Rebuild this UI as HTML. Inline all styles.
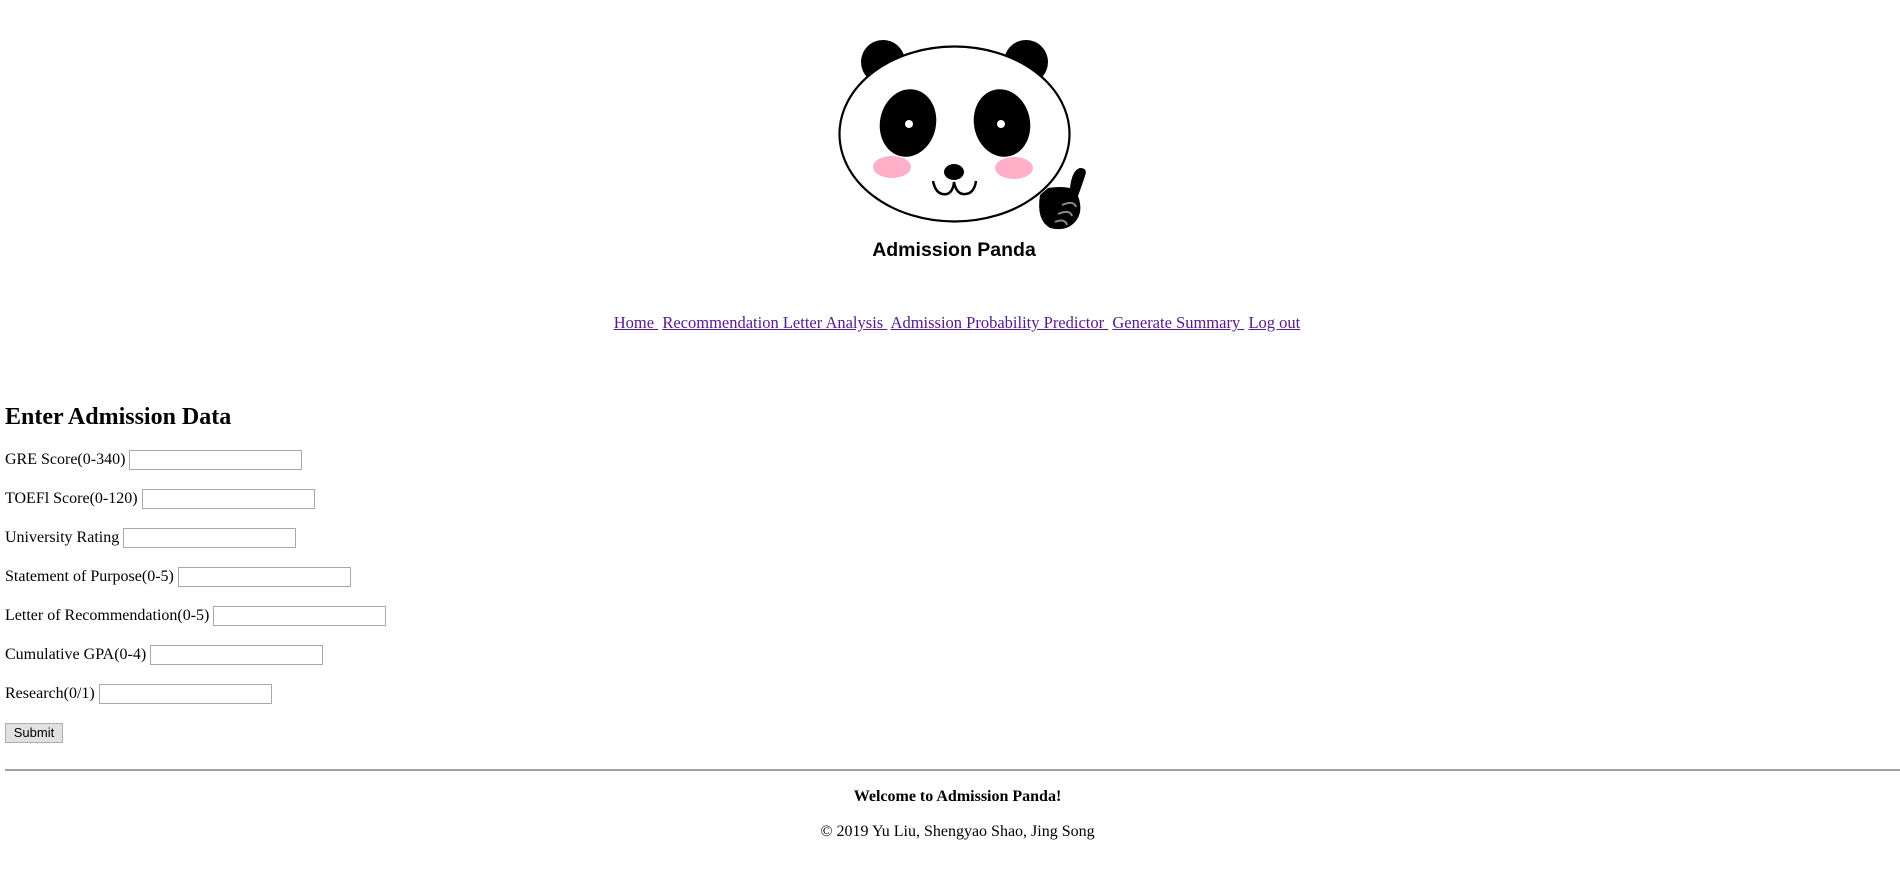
<!DOCTYPE html>
<html><head><meta charset="utf-8"><style>
body{margin:0;width:1900px;height:874px;background:#fff;font-family:"Liberation Serif",serif;font-size:16px;color:#000;position:relative;overflow:hidden}
.a{position:absolute;white-space:nowrap}
a{color:#551a8b;text-decoration:underline}
.row{position:absolute;left:5px;height:20px;display:flex;align-items:center;white-space:nowrap}
.row span{margin-right:4px}
.inp{display:inline-block;width:171px;height:18px;border:1px solid #a9a9a9}
</style></head><body>
<svg class="a" style="left:800px;top:0" width="340" height="280" viewBox="800 0 340 280">
<circle cx="883" cy="62" r="22"/>
<circle cx="1026" cy="62" r="22"/>
<ellipse cx="954.5" cy="134" rx="115" ry="87.5" fill="#fff" stroke="#000" stroke-width="2.2"/>
<ellipse cx="908" cy="123" rx="28" ry="34" transform="rotate(12 908 123)"/>
<ellipse cx="1002" cy="123" rx="28" ry="34" transform="rotate(-12 1002 123)"/>
<circle cx="909" cy="124" r="4" fill="#fff"/>
<circle cx="1001" cy="124" r="4" fill="#fff"/>
<ellipse cx="892" cy="167" rx="19" ry="11" fill="#ffafc8"/>
<ellipse cx="1014" cy="168" rx="19" ry="11" fill="#ffafc8"/>
<ellipse cx="954" cy="172" rx="10" ry="8"/>
<path d="M933 181 Q936 196 947 194 Q953 192 954 182 Q956 193 963 194 Q974 195 976 181" fill="none" stroke="#000" stroke-width="2.5"/>
<path d="M1040 195 Q1036 220 1050 228 Q1066 232 1075 222 Q1084 212 1078 196 Q1082 185 1085 176 Q1088 168 1080 168 Q1072 170 1070 188 Q1060 186 1048 188 Z"/>
<path d="M1062 205 Q1074 200 1076 207 M1058 214 Q1070 209 1072 216 M1055 222 Q1065 218 1067 225" fill="none" stroke="#888" stroke-width="2"/>
<text x="954" y="256" text-anchor="middle" font-family="Liberation Sans,sans-serif" font-weight="bold" font-size="19.5">Admission Panda</text>
</svg>
<div class="a" style="left:610px;top:313px;width:694px;text-align:center;font-size:16.5px"><a>Home&nbsp;</a> <a>Recommendation Letter Analysis&nbsp;</a> <a>Admission Probability Predictor&nbsp;</a> <a>Generate Summary&nbsp;</a> <a>Log out</a></div>
<div class="a" style="left:5px;top:404px;font-size:24px;font-weight:bold">Enter Admission Data</div>
<div class="row" style="top:450px"><span>GRE Score(0-340)</span><i class="inp"></i></div>
<div class="row" style="top:489px"><span>TOEFl Score(0-120)</span><i class="inp"></i></div>
<div class="row" style="top:528px"><span>University Rating</span><i class="inp"></i></div>
<div class="row" style="top:567px"><span>Statement of Purpose(0-5)</span><i class="inp"></i></div>
<div class="row" style="top:606px"><span>Letter of Recommendation(0-5)</span><i class="inp"></i></div>
<div class="row" style="top:645px"><span>Cumulative GPA(0-4)</span><i class="inp"></i></div>
<div class="row" style="top:684px"><span>Research(0/1)</span><i class="inp"></i></div>
<div class="a" style="left:5px;top:723px;width:56px;height:18px;border:1px solid #adadad;background:#e1e1e1;font-family:'Liberation Sans',sans-serif;font-size:13px;text-align:center;line-height:18px">Submit</div>
<div class="a" style="left:5px;top:769px;width:1895px;height:0;border-top:2px solid #a0a0a0"></div>
<div class="a" style="left:5px;top:788px;width:1905px;text-align:center;font-weight:bold">Welcome to Admission Panda!</div>
<div class="a" style="left:5px;top:823px;width:1905px;text-align:center">© 2019 Yu Liu, Shengyao Shao, Jing Song</div>
</body></html>
